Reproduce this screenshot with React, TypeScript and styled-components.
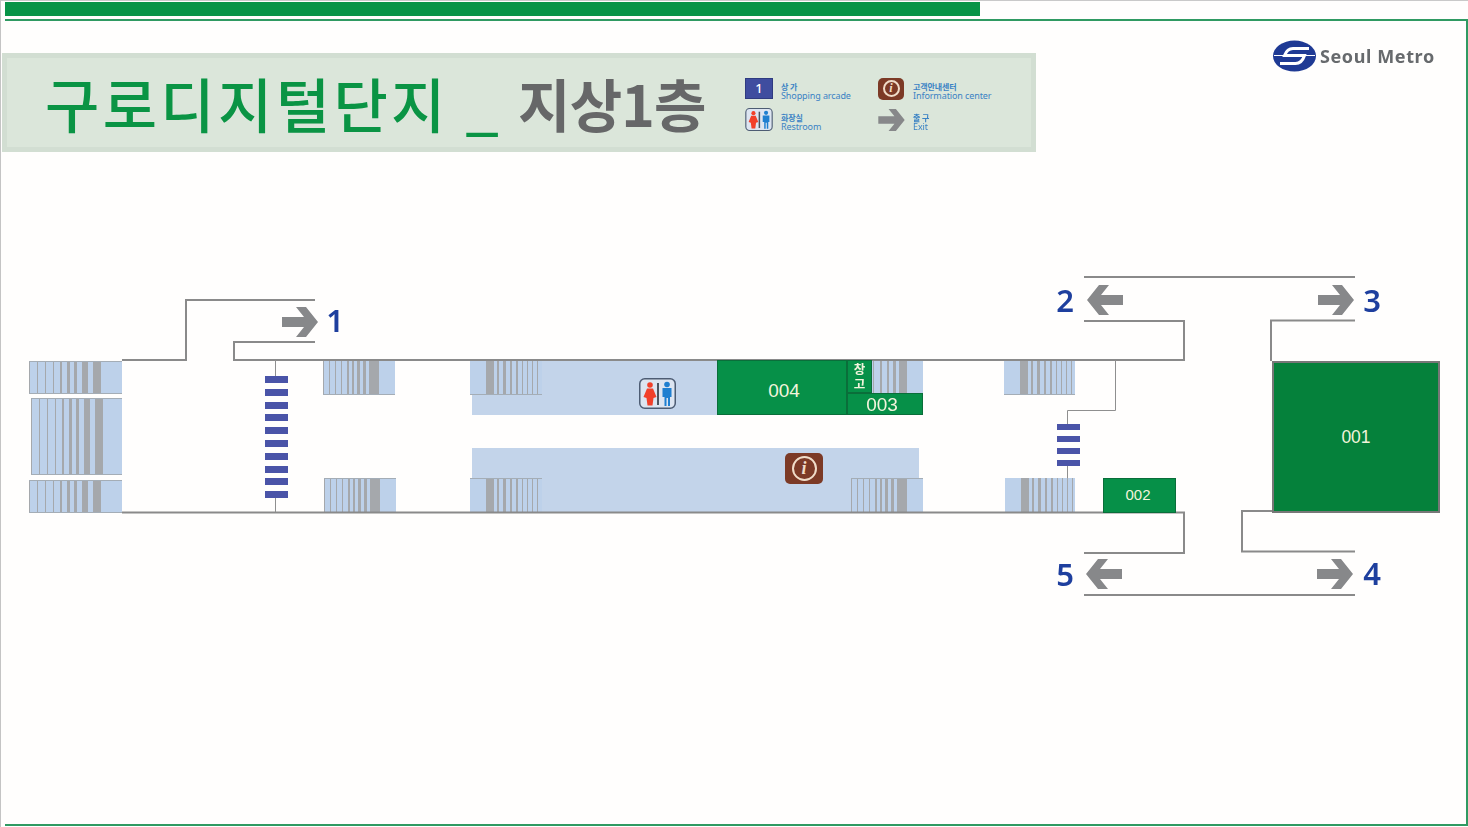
import React from "react";
import styled, { createGlobalStyle } from "styled-components";

const Global = createGlobalStyle`
  html, body { margin: 0; padding: 0; background: #fffefd; }
  body { font-family: "Noto Sans", "Noto Sans CJK KR", sans-serif; }
`;

const MAP_TOP = 270;

const Page = styled.div`
  width: 1468px;
  height: 827px;
  box-sizing: border-box;
  overflow: hidden;
  display: flex;
  flex-direction: column;
  border-top: 1px solid #c9c9c9;
  border-left: 1px solid #c4c4c4;
  filter: blur(0.4px);
`;
const TopBar = styled.div`
  width: 975px;
  height: 14px;
  margin: 1px 0 0 4px;
  background: #089447;
  flex: none;
`;
const Frame = styled.div`
  flex: 1;
  margin: 3px 0 1px 4px;
  box-sizing: border-box;
  border-top: 2.5px solid #2f9a62;
  border-right: 2.5px solid #2f9a62;
  border-bottom: 2.5px solid #2f9a62;
  display: flex;
  flex-direction: column;
`;
const Header = styled.header`
  display: flex;
  align-items: flex-start;
  margin-left: -3px;
  padding-top: 17px;
  height: 248.5px;
  box-sizing: border-box;
  flex: none;
`;
const Banner = styled.div`
  width: 1034px;
  height: 99px;
  margin-top: 15px;
  box-sizing: border-box;
  background: #dbe6da;
  border: 5px solid #d2ded2;
  padding-left: 38px;
  display: flex;
  align-items: center;
  flex: none;
`;
const Title = styled.h1`
  margin: 0;
  font: 500 59px/1 "Noto Sans CJK KR", sans-serif;
  color: #0a9444;
  white-space: pre;
  letter-spacing: 3.4px;
  width: 473px;
  flex: none;
`;
const SubTitle = styled.span`
  font: 600 57px/1 "Noto Sans CJK KR", sans-serif;
  color: #666768;
  letter-spacing: -0.8px;
  width: 227px;
  flex: none;
  white-space: nowrap;
`;
const Legend = styled.div`
  display: grid;
  grid-template-columns: 132px 132px;
  row-gap: 9px;
  margin-top: 3px;
  flex: none;
`;
const LegendItem = styled.div`
  display: flex;
  align-items: center;
  gap: 8px;
  height: 22px;
`;
const LegendIcon = styled.div`
  width: 28px;
  height: 22px;
  display: flex;
  align-items: center;
  justify-content: center;
  flex: none;
`;
const ShopKey = styled.div`
  width: 28px;
  height: 21px;
  background: #3f4d9f;
  border: 1px solid #2f3b80;
  box-sizing: border-box;
  color: #fff;
  font: 500 13px/19px "Noto Sans", sans-serif;
  text-align: center;
`;
const LegendText = styled.div`
  display: flex;
  flex-direction: column;
  color: #3a82c4;
  font: 400 9px/9px "Noto Sans", "Noto Sans CJK KR", sans-serif;
  letter-spacing: -0.1px;
  white-space: nowrap;
  margin: 4px 0 0 0;
`;
const LegendKo = styled.span`
  font: 700 8px/9px "Noto Sans CJK KR", sans-serif;
`;

const Logo = styled.div`
  display: flex;
  align-items: center;
  gap: 4px;
  margin: 2px 0 0 237px;
  flex: none;
`;
const LogoText = styled.span`
  font: 700 18px/1 "Noto Sans", sans-serif;
  color: #676a6d;
  letter-spacing: 0.6px;
  white-space: nowrap;
`;

const MapCanvas = styled.main`
  position: relative;
  flex: 1;
  margin-left: -5px;
`;
type Box = { $x: number; $y: number; $w: number; $h: number };
const placed = (p: Box) => `
  position: absolute;
  left: ${p.$x}px;
  top: ${p.$y - MAP_TOP}px;
  width: ${p.$w}px;
  height: ${p.$h}px;
  box-sizing: border-box;
`;

const Walls = styled.svg`
  position: absolute;
  left: 0;
  top: ${-MAP_TOP}px;
  pointer-events: none;
`;
const Zone = styled.div<Box>`
  ${placed};
  background: #c3d4ea;
`;
const StairBox = styled.div<Box & { $top?: boolean; $bottom?: boolean }>`
  ${placed};
  background: #bdd1ea;
  border-top: ${(p) => (p.$top ? "1.5px solid #a4adb6" : "none")};
  border-bottom: ${(p) => (p.$bottom ? "1.5px solid #a4adb6" : "none")};
`;
const Stripe = styled.i<{ $left: number; $width: number }>`
  position: absolute;
  top: 0;
  bottom: 0;
  left: ${(p) => p.$left}px;
  width: ${(p) => p.$width}px;
  background: #a5a8ac;
`;
const Shop = styled.div<Box & { $size: number; $bg?: string; $border?: string; $nudge?: number; $drop?: number; $lift?: number }>`
  ${placed};
  display: flex;
  align-items: center;
  justify-content: center;
  padding-left: ${(p) => Math.max(p.$nudge ?? 0, 0)}px;
  padding-right: ${(p) => Math.max(-(p.$nudge ?? 0), 0)}px;
  padding-top: ${(p) => p.$drop ?? 0}px;
  padding-bottom: ${(p) => p.$lift ?? 0}px;
  background: ${(p) => p.$bg ?? "#069048"};
  border: ${(p) => p.$border ?? "1px solid #0a6e3a"};
  color: #f2f4dc;
  font: 400 ${(p) => p.$size}px/1 "Liberation Sans", sans-serif;
`;
const Storage = styled(Shop)`
  flex-direction: column;
  font: 700 12.5px/15px "Noto Sans CJK KR", sans-serif;
`;
const Rung = styled.div<Box>`
  ${placed};
  background: #4a54a8;
`;
const ExitNumber = styled.span<{ $x: number; $y: number }>`
  position: absolute;
  left: ${(p) => p.$x - 20}px;
  top: ${(p) => p.$y - MAP_TOP - 20}px;
  width: 40px;
  text-align: center;
  font: 600 31px/40px "Noto Sans", sans-serif;
  color: #1e3f9e;
`;
const MapIcon = styled.div<Box>`
  ${placed};
  display: flex;
`;
const InfoGlyph = styled.div<{ $w: number; $h: number }>`
  width: ${(p) => p.$w}px;
  height: ${(p) => p.$h}px;
  background: #7c3a26;
  border-radius: 5px;
  display: flex;
  align-items: center;
  justify-content: center;
  flex: none;
`;
const InfoRing = styled.div<{ $size: number }>`
  width: ${(p) => p.$size}px;
  height: ${(p) => p.$size}px;
  border: 2px solid #f0dcc8;
  border-radius: 50%;
  box-sizing: border-box;
  color: #f0dcc8;
  display: flex;
  align-items: center;
  justify-content: center;
  font: italic 700 ${(p) => p.$size * 0.72}px/1 "Liberation Serif", serif;
`;

const Arrow = ({ left, w = 36, h = 30 }: { left?: boolean; w?: number; h?: number }) => (
  <svg width={w} height={h} viewBox="0 0 36 30" style={left ? { transform: "scaleX(-1)" } : undefined}>
    <polygon points="0,10 22,10 14,0 24,0 36,15 24,30 14,30 22,20 0,20" fill="#87888a" />
  </svg>
);

const Restroom = ({ w, h }: { w: number; h: number }) => (
  <svg width={w} height={h} viewBox="0 0 37 31">
    <rect x="0.75" y="0.75" width="35.5" height="29.5" rx="5" fill="#dde5f1" stroke="#4d5c73" strokeWidth="1.5" />
    <circle cx="11" cy="7" r="2.8" fill="#f2402a" />
    <path d="M8 10.5 h6 l3.5 8.5 -3 1 -1 7.5 h-5 l-1 -7.5 -3 -1z" fill="#f2402a" />
    <rect x="18" y="5" width="2" height="22" fill="#4c5560" />
    <circle cx="28" cy="6.5" r="2.8" fill="#1f7fd0" />
    <path d="M23.5 10 h9 v9 h-1.5 v9 h-2 v-8 h-1.5 v8 h-2 v-9 h-2z" fill="#1f7fd0" />
  </svg>
);

const LogoMark = () => (
  <svg width="43" height="32" viewBox="0 0 43 32">
    <ellipse cx="21.5" cy="16" rx="21.5" ry="15.5" fill="#1f3a94" />
    <path d="M36 8.5 H20 C15.5 8.5 13 11.5 11.5 15.5 H31.5 C30 20 27 23.5 22.5 23.5 H7" fill="none" stroke="#fff" strokeWidth="3" />
    <path d="M1 15.5 H42" stroke="#fff" strokeWidth="1" />
  </svg>
);

const THICK_RIGHT: [number, number][] = [[0, 1], [8, 1], [16, 1], [24, 1], [31, 2], [38, 3], [45, 3], [53, 6], [64, 8]];
const THICK_RIGHT_SHORT: [number, number][] = [[0, 1], [6, 1], [12, 1], [18, 1], [24, 2], [29, 2], [34, 3], [40, 3], [46, 10]];
const THICK_LEFT: [number, number][] = [[0, 8], [11, 2], [17, 3], [24, 2], [30, 2], [36, 1], [41, 1], [46, 1], [51, 1]];

type StairsProps = Box & { $top?: boolean; $bottom?: boolean; stripes: [number, number][]; from: number };
const Stairs = ({ stripes, from, ...box }: StairsProps) => (
  <StairBox {...box}>
    {stripes.map(([l, w]) => (
      <Stripe key={l} $left={from + l} $width={w} />
    ))}
  </StairBox>
);

const rungsLeft = Array.from({ length: 10 }, (_, i) => 376 + Math.round(i * 12.8));
const rungsRight = [424, 436, 448, 460];

export default function App() {
  return (
    <Page>
      <Global />
      <TopBar />
      <Frame>
        <Header>
          <Banner>
            <Title>{"구로디지털단지 _"}</Title>
            <SubTitle>지상1층</SubTitle>
            <Legend>
              <LegendItem>
                <LegendIcon><ShopKey>1</ShopKey></LegendIcon>
                <LegendText><LegendKo>상 가</LegendKo>Shopping arcade</LegendText>
              </LegendItem>
              <LegendItem>
                <LegendIcon>
                  <InfoGlyph $w={26} $h={22}><InfoRing $size={17}>i</InfoRing></InfoGlyph>
                </LegendIcon>
                <LegendText><LegendKo>고객안내센터</LegendKo>Information center</LegendText>
              </LegendItem>
              <LegendItem>
                <LegendIcon><Restroom w={28} h={23} /></LegendIcon>
                <LegendText><LegendKo>화장실</LegendKo>Restroom</LegendText>
              </LegendItem>
              <LegendItem>
                <LegendIcon><Arrow w={27} h={22} /></LegendIcon>
                <LegendText><LegendKo>출 구</LegendKo>Exit</LegendText>
              </LegendItem>
            </Legend>
          </Banner>
          <Logo>
            <LogoMark />
            <LogoText>Seoul Metro</LogoText>
          </Logo>
        </Header>
        <MapCanvas>
          <Zone $x={472} $y={361} $w={245} $h={54} />
          <Zone $x={472} $y={448} $w={447} $h={64} />

          <Stairs $x={29} $y={361} $w={93} $h={33} $top $bottom stripes={THICK_RIGHT} from={0} />
          <Stairs $x={31} $y={398} $w={91} $h={77} $top $bottom stripes={THICK_RIGHT} from={0} />
          <Stairs $x={29} $y={480} $w={93} $h={33} $top $bottom stripes={THICK_RIGHT} from={0} />
          <Stairs $x={323} $y={361} $w={72} $h={34} $bottom stripes={THICK_RIGHT_SHORT} from={0} />
          <Stairs $x={324} $y={478} $w={72} $h={34} $top stripes={THICK_RIGHT_SHORT} from={0} />
          <Stairs $x={470} $y={361} $w={72} $h={34} $bottom stripes={THICK_LEFT} from={16} />
          <Stairs $x={470} $y={478} $w={72} $h={34} $top stripes={THICK_LEFT} from={16} />
          <Stairs $x={851} $y={478} $w={72} $h={34} $top stripes={THICK_RIGHT_SHORT} from={0} />
          <Stairs $x={871} $y={361} $w={52} $h={33} stripes={[[2, 1], [9, 2], [16, 2], [22, 3], [28, 8]]} from={0} />
          <Stairs $x={1004} $y={361} $w={71} $h={34} $bottom stripes={THICK_LEFT} from={16} />
          <Stairs $x={1005} $y={478} $w={70} $h={34} stripes={THICK_LEFT} from={16} />

          <Walls width="1468" height="827">
            <g fill="none" stroke="#8a8a8a" strokeWidth="2">
              <path d="M122 360 H186 V300 H315" />
              <path d="M315 342 H234 V360 H1184 V321 H1084" />
              <path d="M122 512.5 H1184 V553 H1084" />
              <path d="M1084 277 H1355" />
              <path d="M1355 320.5 H1271 V361" />
              <path d="M1272 511 H1242 V551.5 H1355" />
              <path d="M1084 595 H1355" />
            </g>
            <g fill="none" stroke="#8f8f8f" strokeWidth="1">
              <path d="M275.5 360 V378 M275.5 496 V512" />
              <path d="M1115.5 360 V410.5 H1067.5 V426 M1067.5 464 V478" />
            </g>
          </Walls>

          {rungsLeft.map((y) => <Rung key={y} $x={265} $y={y} $w={23} $h={7} />)}
          {rungsRight.map((y) => <Rung key={y} $x={1057} $y={y} $w={23} $h={6} />)}

          <Shop $x={717} $y={360} $w={130} $h={55} $size={19} $nudge={4} $drop={6}>004</Shop>
          <Storage $x={847} $y={360} $w={25} $h={33} $size={13}><span>창</span><span>고</span></Storage>
          <Shop $x={847} $y={393} $w={76} $h={22} $size={19} $nudge={-6} $drop={2}>003</Shop>
          <Shop $x={1103} $y={478} $w={73} $h={35} $size={15} $nudge={-3} $lift={2}>002</Shop>
          <Shop $x={1272} $y={361} $w={168} $h={152} $size={17.5} $bg="#05813b" $border="2px solid #777" $drop={2}>001</Shop>

          <MapIcon $x={639} $y={378} $w={37} $h={31}><Restroom w={37} h={31} /></MapIcon>
          <MapIcon $x={785} $y={453} $w={38} $h={31}>
            <InfoGlyph $w={38} $h={31}><InfoRing $size={25}>i</InfoRing></InfoGlyph>
          </MapIcon>

          <MapIcon $x={282} $y={307} $w={36} $h={30}><Arrow /></MapIcon>
          <MapIcon $x={1087} $y={285} $w={36} $h={30}><Arrow left /></MapIcon>
          <MapIcon $x={1318} $y={285} $w={36} $h={30}><Arrow /></MapIcon>
          <MapIcon $x={1086} $y={559} $w={36} $h={30}><Arrow left /></MapIcon>
          <MapIcon $x={1317} $y={559} $w={36} $h={30}><Arrow /></MapIcon>

          <ExitNumber $x={335} $y={320}>1</ExitNumber>
          <ExitNumber $x={1065} $y={300}>2</ExitNumber>
          <ExitNumber $x={1372} $y={300}>3</ExitNumber>
          <ExitNumber $x={1372} $y={573}>4</ExitNumber>
          <ExitNumber $x={1065} $y={574}>5</ExitNumber>
        </MapCanvas>
      </Frame>
    </Page>
  );
}
